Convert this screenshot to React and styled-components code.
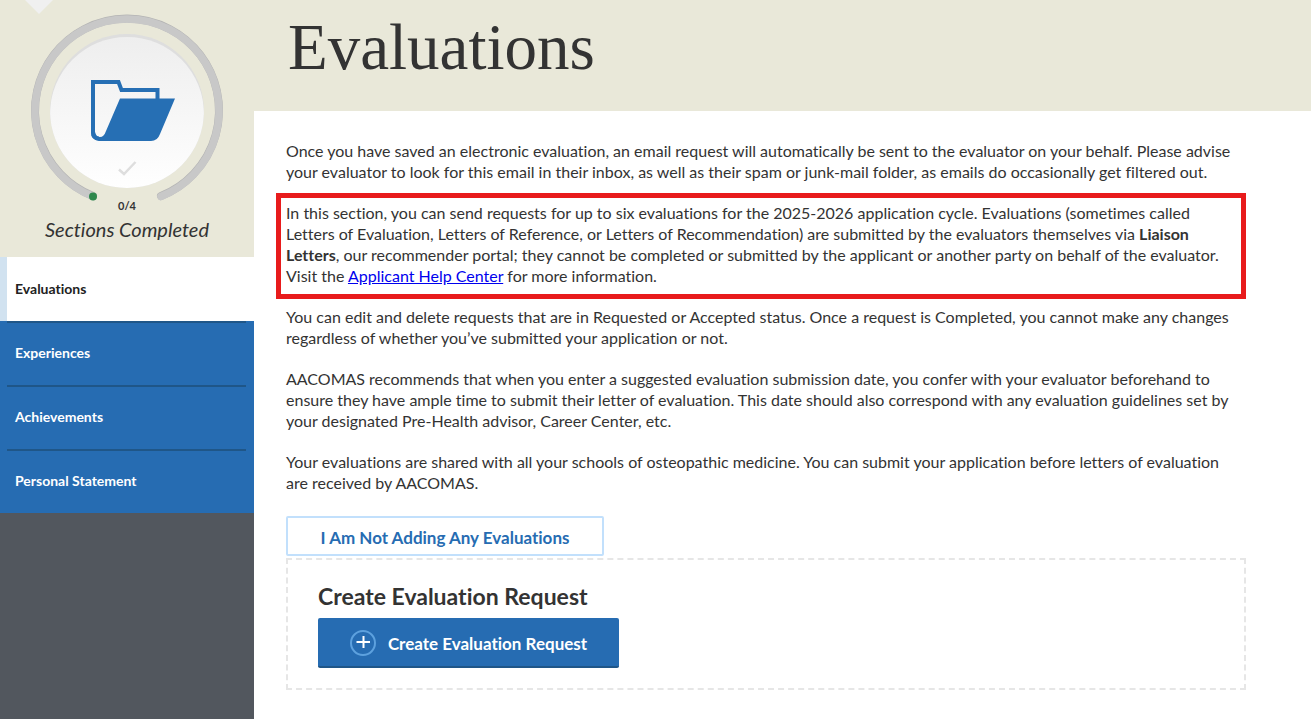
import React, { useState } from 'react';
import styled, { createGlobalStyle } from 'styled-components';

const GlobalStyle = createGlobalStyle`
    *, *::before, *::after {
        box-sizing: border-box;
    }

    body {
        margin: 0;
        background: #fff;
        color: #333;
        font-family: Lato, 'Liberation Sans', sans-serif;
        font-size: 16px;
        font-variant-ligatures: none;
        line-height: 21px;
    }
`;

const Page = styled.div`
    display: flex;
    min-height: 100vh;
`;

const Sidebar = styled.aside`
    flex: 0 0 254px;
    background: #52575e;
`;

const ProgressPanel = styled.div`
    display: flex;
    flex-direction: column;
    align-items: center;
    height: 257px;
    background: #e9e8d9;
`;

const ProgressRing = styled.svg`
    display: block;
    flex: none;
    overflow: visible;
`;

const ProgressCount = styled.div`
    font-size: 11px;
    font-weight: bold;
    line-height: 12px;
`;

const ProgressLabel = styled.div`
    font-size: 20px;
    font-style: italic;
    line-height: 34px;
`;

const NavItem = styled.a`
    display: flex;
    align-items: center;
    height: 64px;
    padding-right: 8px;
    border-left: 7px solid ${({ $active }) => $active ? '#d1e2f0' : '#266cb2'};
    background: ${({ $active }) => $active ? '#fff' : '#266cb2'};
    color: ${({ $active }) => $active ? '#222' : '#fff'};
    font-size: 14px;
    font-weight: bold;
    text-decoration: none;
`;

const NavLabel = styled.span`
    flex: 1;
    height: 64px;
    padding-left: 8px;
    border-top: 2px solid ${({ $divided }) => $divided ? '#1f5688' : 'transparent'};
    line-height: 60px;
`;

const Main = styled.main`
    flex: 1;
    min-width: 0;
`;

const Header = styled.header`
    height: 111px;
    padding: 12px 34px;
    background: #e9e8d9;
`;

const Title = styled.h1`
    margin: 0;
    font-family: 'Liberation Serif', serif;
    font-size: 65px;
    font-weight: normal;
    line-height: 70px;
`;

const Content = styled.div`
    max-width: 1025px;
    padding: 29px 33px 29px 32px;
`;

const Paragraph = styled.p`
    margin: 0 0 20px;
    padding-right: 5px;
`;

const Highlight = styled.div`
    margin: -9px 0 7px -10px;
    padding: 4px 0 8px 5px;
    border: 5px solid #e81b1c;

    ${Paragraph} {
        margin: 0;
    }
`;

const HelpLink = styled.a`
    color: #0000ee;
`;

const OutlineButton = styled.button`
    display: block;
    width: 318px;
    height: 40px;
    margin: 23px 0 2px;
    padding: 2px 0 0;
    border: 2px solid #c2e0fc;
    border-radius: 2px;
    background: #fff;
    color: #266cb2;
    font: bold 17px Lato, 'Liberation Sans', sans-serif;
    font-variant-ligatures: none;
    cursor: pointer;
`;

const RequestPanel = styled.section`
    padding: 20px 30px;
    border: 2px dashed #e6e6e6;
`;

const PanelTitle = styled.h2`
    margin: 0 0 6px;
    font-size: 23px;
    font-weight: bold;
    line-height: 32px;
`;

const CreateButton = styled.button`
    display: flex;
    align-items: center;
    justify-content: center;
    gap: 12px;
    width: 301px;
    height: 50px;
    padding: 2px 0 0;
    border: 0;
    border-bottom: 2px solid #1f5688;
    border-radius: 2px;
    background: #266cb2;
    color: #fff;
    font: bold 17px Lato, 'Liberation Sans', sans-serif;
    font-variant-ligatures: none;
    cursor: pointer;
`;

const sections = ['Evaluations', 'Experiences', 'Achievements', 'Personal Statement'];

function Progress() {
    return (
        <ProgressRing width="254" height="200" viewBox="0 0 254 200" aria-hidden="true">
            <defs>
                <linearGradient id="disc" x1="0" y1="0" x2="0" y2="1">
                    <stop offset="0" stopColor="#eee" />
                    <stop offset="1" stopColor="#fff" />
                </linearGradient>
                <clipPath id="discClip">
                    <circle cx="127" cy="111" r="77" />
                </clipPath>
            </defs>
            <path d="M25 0H53L39 14Z" fill="#f0f0f0" />
            <path d="M93 196A92 92 0 1 1 161 196" fill="none" stroke="#b4b4b4" strokeWidth="8" strokeLinecap="round" />
            <path d="M93 196.5A92 92 0 1 1 161 196.5" fill="none" stroke="#c8c8c8" strokeWidth="7.5" strokeLinecap="round" />
            <circle cx="93" cy="196.5" r="4" fill="#2f884d" />
            <circle cx="127" cy="111" r="77" fill="#dedede" />
            <circle cx="127" cy="114" r="77" fill="url(#disc)" clipPath="url(#discClip)" />
            <path d="M93 82H118.500L121.500 90H157.500V100M93 80V132Q93 138.500 99 138.500" fill="none" stroke="#266fb4" strokeWidth="4" />
            <path d="M120 98.500H175L160 134Q157.500 141 151 141H99Q91 140 91 132H95Q96 137 100 137Q104 137 106 131Z" fill="#266fb4" />
            <path d="M119 169.500L124 174L135.500 162" fill="none" stroke="#dedede" strokeWidth="2.500" />
        </ProgressRing>
    );
}

function PlusIcon() {
    return (
        <svg width="26" height="26" viewBox="0 0 26 26" aria-hidden="true">
            <circle cx="13" cy="13" r="12" fill="none" stroke="#5da1de" strokeWidth="2" />
            <path d="M6.500 12H20M13.500 6V18" stroke="#fff" strokeWidth="2" />
        </svg>
    );
}

function App() {
    const [active, setActive] = useState(sections[0]);
    return (
        <Page>
            <GlobalStyle />
            <Sidebar>
                <ProgressPanel>
                    <Progress />
                    <ProgressCount>0/4</ProgressCount>
                    <ProgressLabel>Sections Completed</ProgressLabel>
                </ProgressPanel>

                <nav>
                    {sections.map((section, index) => (
                        <NavItem
                            key={section}
                            href="#"
                            $active={section === active}
                            onClick={() => setActive(section)}
                        >
                            <NavLabel $divided={index > 0}>{section}</NavLabel>
                        </NavItem>
                    ))}
                </nav>
            </Sidebar>

            <Main>
                <Header>
                    <Title>Evaluations</Title>
                </Header>

                <Content>
                    <Paragraph>
                        Once you have saved an electronic evaluation, an email request will automatically be sent to the evaluator on your behalf. Please advise your evaluator to look for this email in their inbox, as well as their spam or junk-mail folder, as emails do occasionally get filtered out.
                    </Paragraph>

                    <Highlight>
                        <Paragraph>
                            In this section, you can send requests for up to six evaluations for the 2025-2026 application cycle. Evaluations (sometimes called Letters of Evaluation, Letters of Reference, or Letters of Recommendation) are submitted by the evaluators themselves via <strong>Liaison Letters</strong>, our recommender portal; they cannot be completed or submitted by the applicant or another party on behalf of the evaluator. Visit the <HelpLink href="#">Applicant Help Center</HelpLink> for more information.
                        </Paragraph>
                    </Highlight>

                    <Paragraph>
                        You can edit and delete requests that are in Requested or Accepted status. Once a request is Completed, you cannot make any changes regardless of whether you’ve submitted your application or not.
                    </Paragraph>
                    <Paragraph>
                        AACOMAS recommends that when you enter a suggested evaluation submission date, you confer with your evaluator beforehand to ensure they have ample time to submit their letter of evaluation. This date should also correspond with any evaluation guidelines set by your designated Pre-Health advisor, Career Center, etc.
                    </Paragraph>
                    <Paragraph>
                        Your evaluations are shared with all your schools of osteopathic medicine. You can submit your application before letters of evaluation are received by AACOMAS.
                    </Paragraph>

                    <OutlineButton type="button">I Am Not Adding Any Evaluations</OutlineButton>

                    <RequestPanel>
                        <PanelTitle>Create Evaluation Request</PanelTitle>
                        <CreateButton type="button">
                            <PlusIcon />
                            Create Evaluation Request
                        </CreateButton>
                    </RequestPanel>
                </Content>
            </Main>
        </Page>
    );
}

export default App;
